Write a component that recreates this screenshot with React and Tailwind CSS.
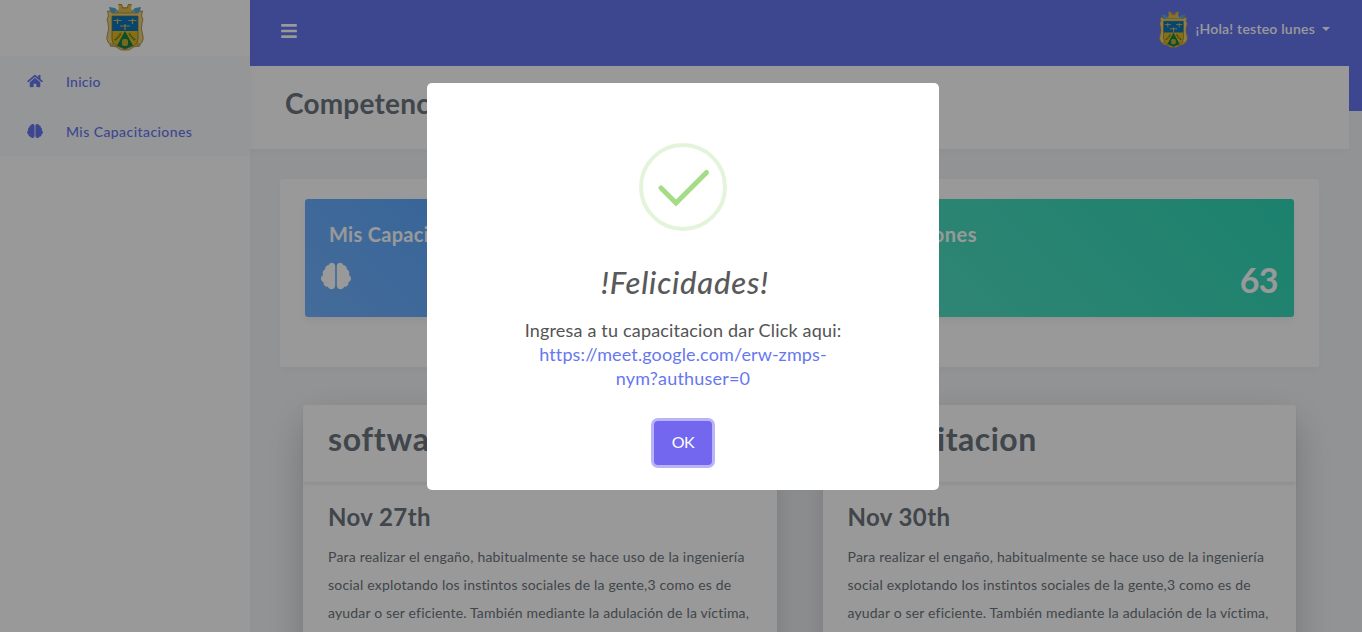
import { FaHome, FaBrain, FaBars } from 'react-icons/fa';

function Crest({ className }) {
  return (
    <svg viewBox="0 0 38 49" preserveAspectRatio="none" className={className} aria-hidden="true">
      <path d="M12 1h4l1 3h4l1-3h4l-1 4 2 5H11l2-5z" fill="#e3c04e" />
      <path d="M12.500 1.500h3l1 3.500h5l1-3.500h3" fill="none" stroke="#a8842e" strokeWidth=".8" />
      <path d="M3 4l6 1 4 4-5 2-4-3zM35 4l-6 1-4 4 5 2 4-3z" fill="#54a9d6" />
      <path d="M9 8q10 4 20 0v3H9z" fill="#a9c6c4" />
      <path d="M1.500 8q3 0 5 2h25q2-2 5-2l-1 5q2.500 3 .5 7-1.500 6 .5 11 2 5-1 9-3 4-8 4-4 4-8.500 3-4.500 1-8.500-3-5 0-8-4-3-4-1-9 2-5 .5-11-2-4 .5-7z" fill="#ecd27a" stroke="#a98a3c" strokeWidth=".9" />
      <path d="M6 13h26v15H6z" fill="#0b74b8" />
      <path d="M6 28h26v7q0 6-5 8l-8 3-8-3q-5-2-5-8z" fill="#e6b91e" />
      <path d="M19 28l8 14.500-8 3.500-8-3.500z" fill="#12824a" />
      <path d="M9 37q4-3 6-7M29 37q-4-3-6-7" fill="none" stroke="#44802c" strokeWidth="2" strokeDasharray="1.500 .7" />
      <rect x="16" y="36" width="6" height="7" rx="2" fill="#c5ad35" />
      <path d="M7.500 17.500h8M11.500 15.500v5.500M22.500 17.500h8M26.500 15.500v5.500M14 23h10M19 21v6" fill="none" stroke="#d1b868" strokeWidth="1.200" />
      <path d="M6 13h26v22q0 6-5 8l-8 3-8-3q-5-2-5-8z" fill="none" stroke="#6f7440" strokeWidth=".8" />
      <circle cx="5.500" cy="42" r="1.500" fill="none" stroke="#b08d3c" strokeWidth=".9" />
      <circle cx="32.500" cy="42" r="1.500" fill="none" stroke="#b08d3c" strokeWidth=".9" />
    </svg>
  );
}

function Sidebar() {
  return (
    <aside className="relative z-10 h-full w-[250px] shrink-0 bg-white shadow-[0_4px_8px_rgba(0,0,0,0.03)]">
      <div className="flex h-14 justify-center pt-[3px]">
        <Crest className="h-[49px] w-[38px]" />
      </div>
      <nav className="h-[100px] bg-[#f8fafc] text-sm font-medium text-[#6777ef]">
        <a className="flex h-[50px] items-center pl-[27px]">
          <FaHome className="h-[14px] w-4" />
          <span className="ml-[23px] pt-[2px] tracking-[0.25px]">Inicio</span>
        </a>
        <a className="flex h-[50px] items-center pl-[27px]">
          <FaBrain className="h-[14px] w-4" />
          <span className="ml-[23px] pt-[2px] tracking-[0.42px]">Mis Capacitaciones</span>
        </a>
      </nav>
    </aside>
  );
}

function Topbar() {
  return (
    <header className="flex h-[66px] shrink-0 items-start justify-between pr-8 pl-[30px] text-white">
      <FaBars className="mt-[22px] h-[18px] w-[18px]" />
      <div className="flex items-center pt-[11px]">
        <Crest className="h-[38px] w-[29px]" />
        <span className="mb-[2px] ml-2 text-sm font-semibold tracking-[0.22px]">¡Hola! testeo lunes</span>
        <span className="mb-[2px] ml-[7px] border-x-4 border-t-4 border-x-transparent border-t-white" />
      </div>
    </header>
  );
}

function Course({ title, date, titleClass }) {
  return (
    <article className="min-w-0 flex-1 rounded-[3px] bg-white text-[#6c757d] shadow-[0_15px_40px_rgba(0,0,0,0.2)]">
      <div className="h-[77px] pt-[10px] pl-[25px] shadow-[0_3px_3px_rgba(0,0,0,0.06)]">
        <h2 className={titleClass}>{title}</h2>
      </div>
      <div className="pt-[17px] pl-[25px]">
        <h3 className="text-2xl leading-9 font-bold tracking-[0.4px]">{date}</h3>
        <p className="pt-[8px] text-sm leading-7 whitespace-nowrap">
          <span className="block tracking-[0.2px]">Para realizar el engaño, habitualmente se hace uso de la ingeniería</span>
          <span className="block tracking-[0.2px]">social explotando los instintos sociales de la gente,3 como es de</span>
          <span className="block tracking-[0.17px]">ayudar o ser eficiente. También mediante la adulación de la víctima,</span>
        </p>
      </div>
    </article>
  );
}

function Modal() {
  return (
    <div className="fixed inset-0 z-20 flex items-start justify-center bg-black/40 pt-[83px] pl-1">
      <div className="flex h-[407px] w-[512px] flex-col items-center rounded-[5px] bg-white pt-[60px]">
        <svg viewBox="0 0 88 88" className="size-[88px] shrink-0" fill="none">
          <circle cx="44" cy="44" r="42" stroke="#a5dc86" strokeOpacity=".3" strokeWidth="4" />
          <path d="M22 45l15 15L67.500 29.500" stroke="#a5dc86" strokeWidth="5" strokeLinecap="round" />
        </svg>
        <h2 className="mt-[28px] ml-1 text-[31px] leading-[46px] font-medium tracking-[0.8px] text-[#595959] italic">!Felicidades!</h2>
        <p className="mt-[13px] text-center text-lg leading-6 text-[#545454]">
          <span className="block tracking-[0.18px]">Ingresa a tu capacitacion dar Click aqui:</span>
          <a className="block text-[#6777ef]">
            <span className="block tracking-[0.13px]">https://meet.google.com/erw-zmps-</span>
            <span className="block tracking-[0.19px]">nym?authuser=0</span>
          </a>
        </p>
        <button className="mt-[31px] h-11 w-[58px] rounded-[4px] bg-[#7367f0] pb-[2px] text-base tracking-[-0.5px] text-white shadow-[0_0_0_3px_rgba(115,103,240,0.5)]">OK</button>
      </div>
    </div>
  );
}

export default function App() {
  return (
    <div className="flex h-[632px] w-full overflow-hidden font-['Lato','Noto_Sans',sans-serif]">
      <Sidebar />
      <main className="flex min-w-0 flex-1 flex-col bg-[linear-gradient(#6777ef_111px,#f4f6f9_111px)]">
        <Topbar />
        <div className="mr-[13px] h-[83px] shrink-0 bg-white pt-[16px] pl-[35px] shadow-[0_4px_8px_rgba(0,0,0,0.03)]">
          <h1 className="text-[28px] leading-[42px] font-bold tracking-[0.2px] text-[#6c757d]">Competencias</h1>
        </div>
        <section className="mt-[30px] mr-[43px] ml-[30px] grid h-[188px] shrink-0 grid-cols-2 gap-[25px] rounded-[3px] bg-white px-[25px] pt-[20px] shadow-[0_4px_8px_rgba(0,0,0,0.03)]">
          <div className="h-[118px] rounded-[3px] bg-[linear-gradient(45deg,#73b4ff,#4099ff)] pt-[20px] text-white shadow-[0_4px_8px_rgba(0,0,0,0.05)]">
            <h2 className="pl-6 text-xl leading-[30px] font-bold tracking-[0.3px]">Mis Capacitaciones</h2>
            <FaBrain className="mt-[12px] ml-4 size-[30px]" />
          </div>
          <div className="h-[118px] rounded-[3px] bg-[linear-gradient(45deg,#59e0c5,#2ed8b6)] pt-[20px] pr-4 text-white shadow-[0_4px_8px_rgba(0,0,0,0.05)]">
            <h2 className="pl-6 text-xl leading-[30px] font-bold tracking-[0.49px]">Capacitaciones</h2>
            <p className="mt-[7px] text-right text-[34px] leading-[48px] font-bold tracking-[-0.6px]">63</p>
          </div>
        </section>
        <section className="mt-[38px] mr-[66px] ml-[53px] flex h-[320px] shrink-0 gap-[46px]">
          <Course title="software" date="Nov 27th" titleClass="text-[32px] leading-[48px] font-bold tracking-[0.77px]" />
          <Course title="Capacitacion" date="Nov 30th" titleClass="text-[32px] leading-[48px] font-bold tracking-[0.47px]" />
        </section>
      </main>
      <Modal />
    </div>
  );
}
